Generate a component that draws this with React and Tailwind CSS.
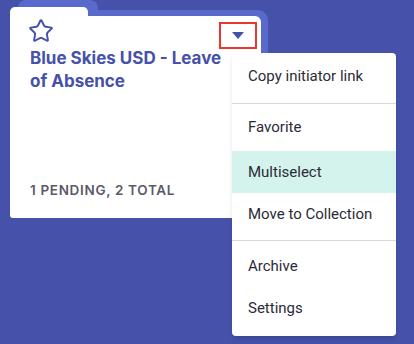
import React from 'react';
import { Star } from 'lucide-react';

const menuGroups = [
  [{ label: 'Copy initiator link', h: 'h-[47px]' }],
  [
    { label: 'Favorite', h: 'h-[47px]' },
    { label: 'Multiselect', h: 'h-[42px]', active: true },
    { label: 'Move to Collection', h: 'h-[42px]' },
  ],
  [
    { label: 'Archive', h: 'h-[42px]' },
    { label: 'Settings', h: 'h-[42px]' },
  ],
];

function MenuItem({ item }){
  return (
    <div className={'flex items-center pl-[16px] text-[15px] text-[#2b2b38] ' + item.h + (item.active ? ' bg-[#d4f3ec]' : '')}>
      {item.label}
    </div>
  );
}

function FolderCard(){
  return (
    <div className="relative ml-[10px] w-[258px] h-[218px]">
      {/* back folder layer */}
      <div className="absolute left-[8px] top-0 w-[80px] h-[16px] bg-[#5a69cc] rounded-t-[8px]"></div>
      <div className="absolute left-[8px] top-[10px] right-0 bottom-[10px] bg-[#5a69cc] rounded-[10px]"></div>
      {/* front tab */}
      <div className="absolute left-0 top-[7px] w-[78px] h-[14px] bg-white rounded-t-[5px]"></div>

      <div className="relative top-[16px] w-[251px] h-[202px] bg-white rounded-tr-[6px] rounded-b-[3px] flex flex-col pl-[18px] pr-[4px]">
        <div className="flex justify-between items-start pt-[2px]">
          <Star size={26} strokeWidth={1.8} className="text-[#4651aa]" />
          <button className="mt-[4px] w-[38px] h-[27px] border-2 border-[#e8372f] flex items-center justify-center">
            <svg width="12" height="7" viewBox="0 0 12 7"><path d="M0 0 L12 0 L6 7 Z" fill="#4651aa" /></svg>
          </button>
        </div>
        <h3 className="-mt-[2px] pl-[2px] w-[210px] text-[17px] leading-[23px] font-bold text-[#4651aa]" style={{ fontFamily: 'Inter, sans-serif' }}>
          Blue Skies USD - Leave of Absence
        </h3>
        <div className="mt-auto mb-[18px] pl-[2px] text-[13.5px] leading-[20px] font-semibold tracking-[0.05em] text-[#5b5967]" style={{ fontFamily: 'Inter, sans-serif' }}>
          1 PENDING, 2 TOTAL
        </div>
      </div>
    </div>
  );
}

export default function App(){
  return (
    <div className="relative w-[414px] h-[344px] bg-[#4651aa] overflow-hidden" style={{ fontFamily: 'Roboto, sans-serif' }}>
      <FolderCard />
      <div className="absolute left-[232px] top-[53px] w-[164px] h-[283px] bg-white rounded-[4px] shadow-md pb-[7px]">
        <MenuItem item={menuGroups[0][0]} />
        <div className="mt-[3px] h-px bg-[#d9d9d9]"></div>
        {menuGroups[1].map(it => <MenuItem key={it.label} item={it} />)}
        <div className="mt-[5px] h-px bg-[#d9d9d9]"></div>
        <div className="mt-[4px]">
          {menuGroups[2].map(it => <MenuItem key={it.label} item={it} />)}
        </div>
      </div>
    </div>
  );
}
